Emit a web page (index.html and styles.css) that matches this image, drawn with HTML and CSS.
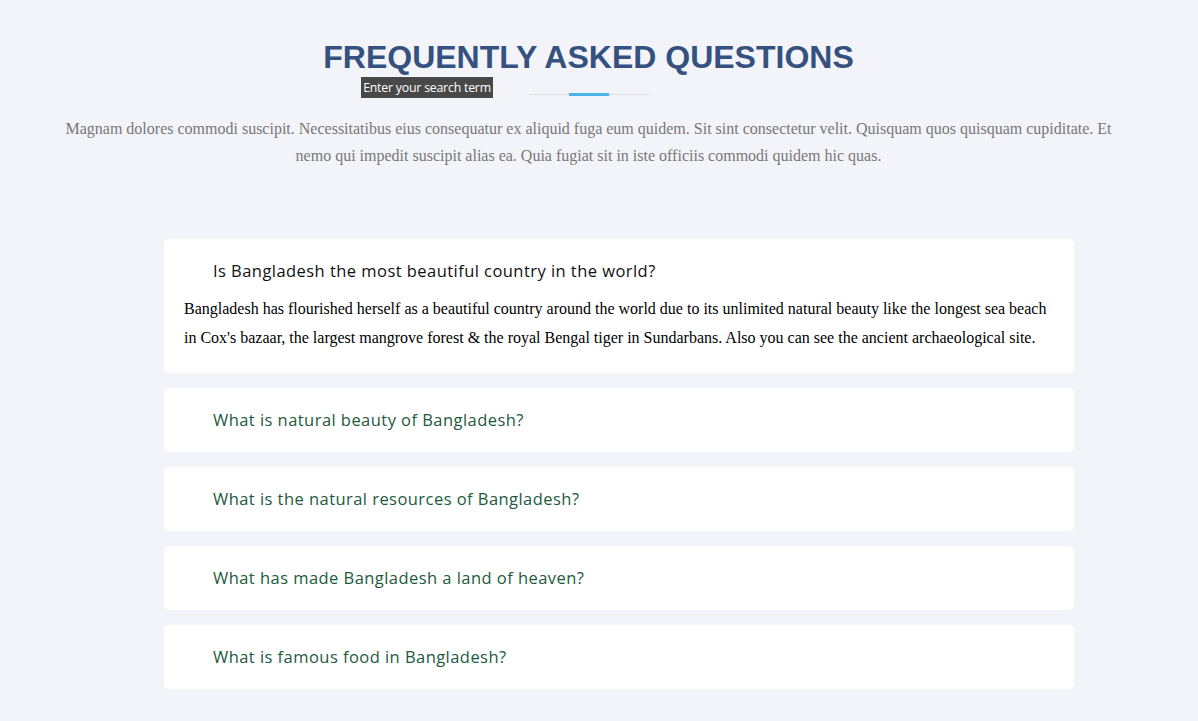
FILE: index.html
```html
<!DOCTYPE html>
<html lang="en">
<head>
<meta charset="utf-8">
<title>FAQ</title>
<link rel="stylesheet" href="styles.css">
</head>
<body>
<section class="faq">
  <header class="faq-head">
    <h1 class="faq-title">FREQUENTLY ASKED QUESTIONS</h1>
    <div class="divider"><span class="divider-bar"></span></div>
    <p class="faq-intro">Magnam dolores commodi suscipit. Necessitatibus eius consequatur ex aliquid fuga eum quidem. Sit sint consectetur velit. Quisquam quos quisquam cupiditate. Et nemo qui impedit suscipit alias ea. Quia fugiat sit in iste officiis commodi quidem hic quas.</p>
    <div class="tooltip">Enter your search term</div>
  </header>
  <div class="faq-list">
    <div class="faq-item open">
      <h3 class="faq-q">Is Bangladesh the most beautiful country in the world?</h3>
      <p class="faq-a">Bangladesh has flourished herself as a beautiful country around the world due to its unlimited natural beauty like the longest sea beach in Cox's bazaar, the largest mangrove forest &amp; the royal Bengal tiger in Sundarbans. Also you can see the ancient archaeological site.</p>
    </div>
    <div class="faq-item">
      <h3 class="faq-q">What is natural beauty of Bangladesh?</h3>
    </div>
    <div class="faq-item">
      <h3 class="faq-q">What is the natural resources of Bangladesh?</h3>
    </div>
    <div class="faq-item">
      <h3 class="faq-q">What has made Bangladesh a land of heaven?</h3>
    </div>
    <div class="faq-item">
      <h3 class="faq-q">What is famous food in Bangladesh?</h3>
    </div>
  </div>
</section>
</body>
</html>
```
FILE: styles.css
```css
html, body {
  margin: 0;
  padding: 0;
}
body {
  background: #f3f4f9;
  font-family: "Liberation Serif", "Times New Roman", serif;
  width: 1198px;
  height: 721px;
  overflow: hidden;
}
.faq {
  padding-top: 36px;
}
.faq-head {
  position: relative;
  width: 1177px;
  box-sizing: border-box;
  padding: 0 58px;
  text-align: center;
}
.faq-title {
  margin: 0;
  font-family: "Liberation Sans", Arial, sans-serif;
  font-weight: 700;
  font-size: 32px;
  line-height: 42px;
  color: #35517f;
}
.divider {
  width: 120px;
  height: 1px;
  background: #dcdde3;
  margin: 16px auto 0;
  display: flex;
  justify-content: center;
  align-items: center;
}
.divider-bar {
  width: 40px;
  height: 3px;
  background: #4cb3e5;
}
.faq-intro {
  margin: 20px 0 0;
  font-size: 16px;
  line-height: 27px;
  color: #777777;
}
.tooltip {
  position: absolute;
  left: 360px;
  top: 40px;
  width: 134px;
  height: 23px;
  box-sizing: border-box;
  border: 1px solid #f6f6f6;
  background: #484848;
  color: #ffffff;
  font-family: "Open Sans", "Noto Sans", sans-serif;
  font-size: 12.3px;
  letter-spacing: -0.2px;
  line-height: 21px;
  text-align: center;
}
.faq-list {
  width: 910px;
  margin: 70px 0 0 164px;
  display: flex;
  flex-direction: column;
  gap: 15px;
}
.faq-item {
  background: #ffffff;
  border-radius: 5px;
  padding: 20px;
}
.faq-q {
  margin: 0;
  padding-left: 29px;
  font-family: "Open Sans", "Noto Sans", sans-serif;
  font-weight: 500;
  font-size: 16.5px;
  letter-spacing: 0.45px;
  line-height: 24px;
  color: #1c5a3c;
}
.open {
  padding-bottom: 21px;
}
.open .faq-q {
  color: #111111;
}
.faq-a {
  margin: 11px 0 0;
  font-size: 16px;
  line-height: 29px;
  color: #000000;
}
```
